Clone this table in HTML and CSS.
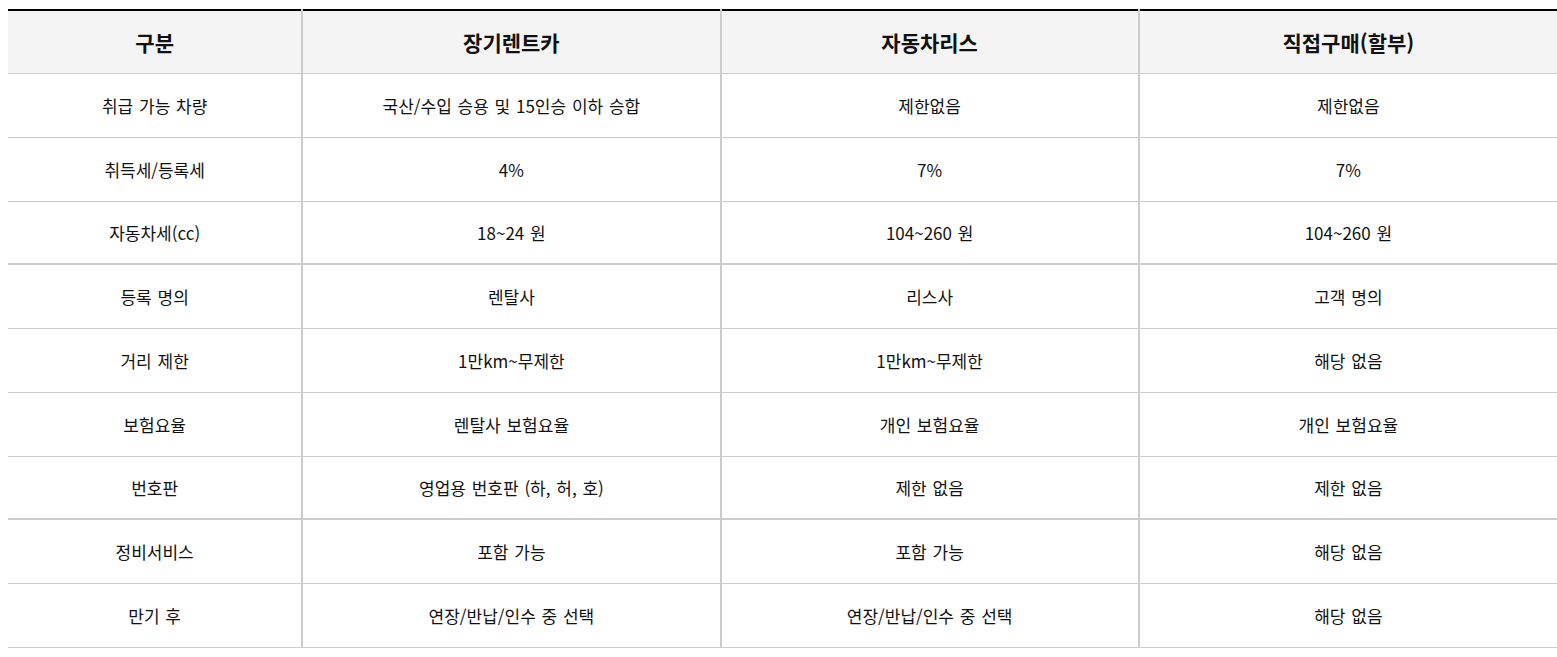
FILE: index.html
```html
<!DOCTYPE html>
<html lang="ko">
<head>
<meta charset="utf-8">
<title>비교표</title>
<link rel="stylesheet" href="styles.css">
</head>
<body>
<table class="cmp">
  <colgroup>
    <col class="c-first"><col class="c-data"><col class="c-data"><col class="c-data">
  </colgroup>
  <thead>
    <tr><th>구분</th><th>장기렌트카</th><th>자동차리스</th><th>직접구매(할부)</th></tr>
  </thead>
  <tbody>
    <tr><td>취급 가능 차량</td><td>국산/수입 승용 및 15인승 이하 승합</td><td>제한없음</td><td>제한없음</td></tr>
    <tr><td>취득세/등록세</td><td>4%</td><td>7%</td><td>7%</td></tr>
    <tr class="grp-end"><td>자동차세(cc)</td><td>18~24 원</td><td>104~260 원</td><td>104~260 원</td></tr>
    <tr><td>등록 명의</td><td>렌탈사</td><td>리스사</td><td>고객 명의</td></tr>
    <tr><td>거리 제한</td><td>1만km~무제한</td><td>1만km~무제한</td><td>해당 없음</td></tr>
    <tr><td>보험요율</td><td>렌탈사 보험요율</td><td>개인 보험요율</td><td>개인 보험요율</td></tr>
    <tr class="grp-end"><td>번호판</td><td>영업용 번호판 (하, 허, 호)</td><td>제한 없음</td><td>제한 없음</td></tr>
    <tr><td>정비서비스</td><td>포함 가능</td><td>포함 가능</td><td>해당 없음</td></tr>
    <tr><td>만기 후</td><td>연장/반납/인수 중 선택</td><td>연장/반납/인수 중 선택</td><td>해당 없음</td></tr>
  </tbody>
</table>
</body>
</html>
```
FILE: styles.css
```css
html, body {
  margin: 0;
  background: #fff;
}
body {
  padding: 9px 0 0 8px;
  font-family: "Noto Sans CJK KR", "Noto Sans", sans-serif;
  color: #111;
}
.cmp {
  width: 1549px;
  border-collapse: collapse;
  table-layout: fixed;
  border-top: 2px solid #000;
}
.c-first { width: 19%; }
.c-data { width: 27%; }
.cmp th {
  height: 62px;
  padding: 0;
  background: #f4f4f4;
  font-size: 21px;
  font-weight: 700;
  color: #111;
  text-align: center;
  vertical-align: middle;
  border-bottom: 1px solid #ccc;
  border-left: 2px solid #ccc;
}
.cmp td {
  height: 63px;
  padding: 0;
  font-size: 17px;
  word-spacing: 1px;
  text-align: center;
  vertical-align: middle;
  border-bottom: 1px solid #ccc;
  border-left: 2px solid #ccc;
}
.cmp th:first-child, .cmp td:first-child { border-left: none; }
.cmp tr.grp-end td {
  height: 61px;
  border-bottom: 2px solid #ccc;
}
```
